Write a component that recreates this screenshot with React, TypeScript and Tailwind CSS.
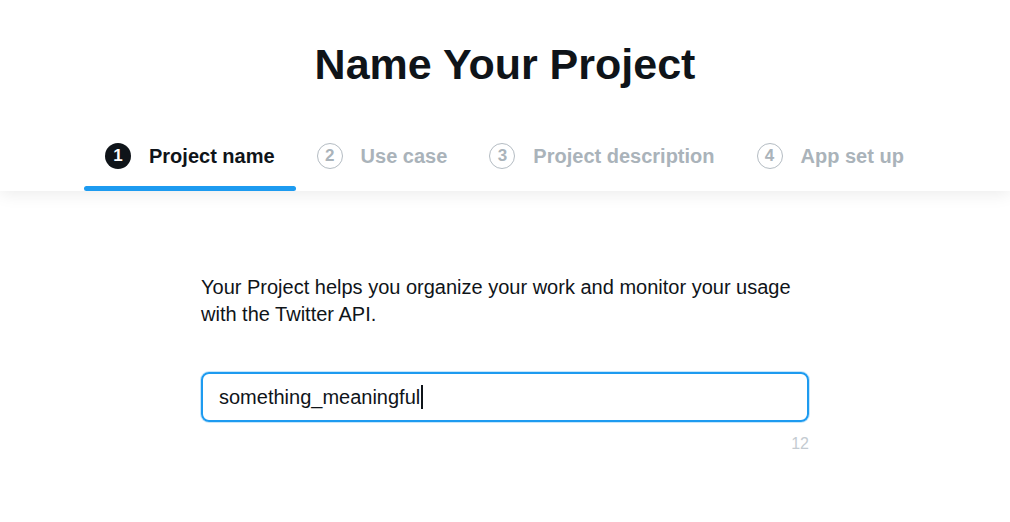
const steps = ['Project name', 'Use case', 'Project description', 'App set up'];

export default function App() {
  const active = 0;

  return (
    <div className="min-h-screen bg-white text-[#0f1419]" style={{ fontFamily: '"Liberation Sans", Arial, sans-serif' }}>
      {/* Header with title + steps */}
      <header className="relative bg-white shadow-[0_3px_16px_rgba(0,0,0,0.08)]">
        <h1 className="pt-[38px] text-center text-[43px] font-bold leading-[52px]">
          Name Your Project
        </h1>
        <nav className="mt-[38px] flex pl-[84px]">
          {steps.map((step, i) => {
            const isActive = i === active;
            return (
              <div key={step} className="relative flex h-[63px] items-center gap-[18px] px-[21px] pb-[7px]">
                <span
                  className={
                    isActive
                      ? 'flex h-[26px] w-[26px] items-center justify-center rounded-full bg-[#0f1419] text-[17px] font-bold text-white'
                      : 'flex h-[26px] w-[26px] items-center justify-center rounded-full border-[1.5px] border-[#b4bcc3] text-[17px] font-bold text-[#aab3ba]'
                  }
                >
                  {i + 1}
                </span>
                <span className={isActive ? 'text-[20px] font-bold text-[#0f1419]' : 'text-[20px] font-bold text-[#aab3ba]'}>
                  {step}
                </span>
                {isActive && <span className="absolute bottom-0 left-0 right-0 h-[5px] rounded-full bg-[#1d9bf0]" />}
              </div>
            );
          })}
        </nav>
      </header>

      {/* Form */}
      <main className="mx-auto w-[608px] pt-[83px]">
        <p className="text-[20px] leading-[27px] text-[#0f1419]">
          Your Project helps you organize your work and monitor your usage with the Twitter API.
        </p>
        <div className="mt-[44px] flex h-[50px] w-full items-center rounded-[8px] border-2 border-[#1d9bf0] px-[16px] shadow-[0_0_0_1px_rgba(29,155,240,0.25)]">
          <span className="text-[20px] text-[#0f1419]">something_meaningful</span>
          <span className="ml-[1px] h-[24px] w-[2px] bg-[#0f1419]" />
        </div>
        <div className="mt-[10px] text-right text-[16px] text-[#c4cbd1]">12</div>
      </main>
    </div>
  );
}
